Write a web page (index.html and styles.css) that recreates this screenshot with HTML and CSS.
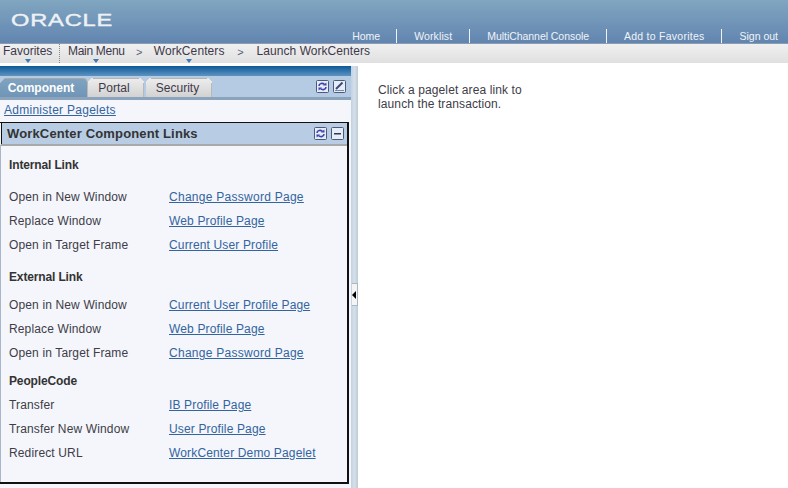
FILE: index.html
```html
<!DOCTYPE html>
<html lang="en">
<head>
<meta charset="utf-8">
<title>WorkCenter</title>
<link rel="stylesheet" href="styles.css">
</head>
<body>
<svg class="defs" width="0" height="0" aria-hidden="true">
  <symbol id="refresh" viewBox="0 0 13 13">
    <rect x="0.5" y="0.5" width="12" height="12" rx="1" fill="#e6edf6" stroke="#4a5a78"/>
    <path d="M3 6 C3 3.5 6.5 2.5 8.5 4.5" fill="none" stroke="#3c42b0" stroke-width="1.6"/>
    <path d="M7 5.6 L10.6 5.6 L10.3 2.6 Z" fill="#3c42b0"/>
    <path d="M10 7 C10 9.5 6.5 10.5 4.5 8.5" fill="none" stroke="#3c42b0" stroke-width="1.6"/>
    <path d="M6 7.4 L2.4 7.4 L2.7 10.4 Z" fill="#3c42b0"/>
  </symbol>
  <symbol id="edit" viewBox="0 0 13 13">
    <rect x="0.5" y="0.5" width="12" height="12" rx="1" fill="#e6edf6" stroke="#4a5a78"/>
    <path d="M3 9 L9.5 2.5" fill="none" stroke="#3a4a78" stroke-width="2"/>
    <path d="M2 10.5 H11" fill="none" stroke="#7a88a8"/>
  </symbol>
  <symbol id="minus" viewBox="0 0 13 13">
    <rect x="0.5" y="0.5" width="12" height="12" rx="1" fill="#e6edf6" stroke="#4a5a78"/>
    <path d="M3 6 H10 V7.5 H3 Z" fill="#2c3a60"/>
  </symbol>
</svg>

<header class="banner">
  <div class="logo"><span class="logo-text">ORACLE</span></div>
  <nav class="top-nav">
    <a class="top-link">Home</a>
    <a class="top-link top-worklist">Worklist</a>
    <a class="top-link top-multi">MultiChannel Console</a>
    <a class="top-link top-add">Add to Favorites</a>
    <a class="top-link">Sign out</a>
  </nav>
</header>

<nav class="crumbs">
  <span class="crumb crumb-fav">Favorites<i class="drop"></i></span>
  <span class="crumb crumb-main">Main Menu<i class="drop"></i></span>
  <span class="chev chev-a">&gt;</span>
  <span class="crumb crumb-wc">WorkCenters<i class="drop"></i></span>
  <span class="chev chev-b">&gt;</span>
  <span class="crumb crumb-last">Launch WorkCenters</span>
</nav>

<main class="workspace">
  <aside class="side">
    <div class="side-panel">
      <div class="top-strip"></div>
      <div class="tabbar">
        <span class="tab tab-on tab-component">Component</span>
        <span class="tab tab-portal">Portal</span>
        <span class="tab tab-security">Security</span>
        <span class="tab-icons">
          <svg class="ico"><use href="#refresh"/></svg>
          <svg class="ico"><use href="#edit"/></svg>
        </span>
      </div>
      <div class="admin"><a class="link link-admin">Administer Pagelets</a></div>
      <section class="box">
        <div class="box-head">
          <h2 class="box-title">WorkCenter Component Links</h2>
          <svg class="ico"><use href="#refresh"/></svg>
          <svg class="ico"><use href="#minus"/></svg>
        </div>
        <div class="box-body">
          <h3 class="sec sec-first">Internal Link</h3>
          <div class="row"><span>Open in New Window</span><a class="link link-wide">Change Password Page</a></div>
          <div class="row"><span>Replace Window</span><a class="link">Web Profile Page</a></div>
          <div class="row"><span>Open in Target Frame</span><a class="link">Current User Profile</a></div>
          <h3 class="sec sec-next">External Link</h3>
          <div class="row"><span>Open in New Window</span><a class="link">Current User Profile Page</a></div>
          <div class="row"><span>Replace Window</span><a class="link">Web Profile Page</a></div>
          <div class="row"><span>Open in Target Frame</span><a class="link link-wide">Change Password Page</a></div>
          <h3 class="sec sec-last">PeopleCode</h3>
          <div class="row"><span>Transfer</span><a class="link">IB Profile Page</a></div>
          <div class="row"><span>Transfer New Window</span><a class="link">User Profile Page</a></div>
          <div class="row"><span>Redirect URL</span><a class="link">WorkCenter Demo Pagelet</a></div>
        </div>
      </section>
    </div>
    <div class="splitter"><span class="handle"></span></div>
  </aside>
  <div class="content">
    <p class="hint">Click a pagelet area link to<br>launch the transaction.</p>
  </div>
</main>
</body>
</html>
```

FILE: styles.css
```css
* { box-sizing: border-box; }
html, body { margin: 0; height: 100%; overflow: hidden; }
body {
  width: 788px;
  height: 488px;
  font-family: "Liberation Sans", Arial, sans-serif;
  font-size: 12px;
  color: #403c48;
  background: #fff;
  display: flex;
  flex-direction: column;
}
.defs { display: block; height: 0; }

.banner {
  height: 44px;
  flex: none;
  display: flex;
  justify-content: space-between;
  background: linear-gradient(#80a6c0, #6285b0);
  border-bottom: 1px solid #8a9cb0;
}
.logo { padding: 11px 0 0 11px; }
.logo-text {
  display: inline-block;
  color: #eef2f5;
  font-size: 17px;
  line-height: 20px;
  letter-spacing: 0.6px;
  -webkit-text-stroke: 0.4px #eef2f5;
  transform: scaleX(1.39);
  transform-origin: left center;
}
.top-nav {
  display: flex;
  align-items: flex-end;
  padding: 0 10px 0 0;
}
.top-link {
  color: #f0f4f8;
  font-size: 10.5px;
  line-height: 14px;
  padding: 0 17px;
  border-left: 1px solid #f0f4f8;
}
.top-link:first-child { border-left: 0; padding-right: 16px; }
.top-link:last-child { padding-right: 0; }
.top-worklist { letter-spacing: 0.12px; }
.top-multi { letter-spacing: -0.05px; }
.top-add { letter-spacing: 0.25px; }

.crumbs {
  height: 19px;
  flex: none;
  display: flex;
  align-items: flex-start;
  padding-left: 3px;
  background: linear-gradient(#f0f0f0, #e0e0e0);
  line-height: 15px;
  color: #40384a;
}
.crumb { position: relative; white-space: nowrap; }
.crumb-fav {
  width: 57px;
  margin-right: 8px;
  height: 19px;
  border-right: 1px dotted #888;
}
.crumb-main { letter-spacing: -0.3px; }
.crumb-wc { letter-spacing: 0.1px; }
.crumb-last { letter-spacing: 0.05px; }
.chev { text-align: center; font-size: 11px; line-height: 16px; color: #56607a; }
.chev-a { width: 29px; }
.chev-b { width: 32px; }
.drop {
  position: absolute;
  left: 50%;
  top: 15px;
  margin-left: -3px;
  width: 0;
  height: 0;
  border: 3.5px solid transparent;
  border-top: 4px solid #3f78b5;
  border-bottom: 0;
}
.crumb-fav .drop { left: 25px; }

.workspace {
  flex: 1;
  display: flex;
  padding-top: 3px;
  min-height: 0;
}
.side { width: 358px; flex: none; display: flex; }
.side-panel {
  width: 351px;
  display: flex;
  flex-direction: column;
  background: #f4f6fb;
}
.top-strip {
  height: 10px;
  flex: none;
  background: linear-gradient(#0b5897, #5f93c0);
}
.tabbar {
  height: 24px;
  flex: none;
  display: flex;
  align-items: flex-end;
  background: #b5cbe3;
  border-bottom: 3px solid #8ba4bc;
  padding-right: 5px;
}
.tab {
  position: relative;
  height: 19px;
  line-height: 18px;
  text-align: center;
  background: linear-gradient(#ececec, #d2d2d2);
  border-top: 1px solid #b4b4b4;
  border-right: 1px solid #b8b8b8;
  color: #3f3a4a;
}
.tab::before, .tab::after {
  content: "";
  position: absolute;
  top: -1px;
  width: 5px;
  height: 5px;
}
.tab::before {
  left: 0;
  background: linear-gradient(135deg, #b5cbe3 38%, #e9e9e9 38%, #e9e9e9 62%, transparent 62%);
}
.tab::after {
  right: -1px;
  background: linear-gradient(225deg, #b5cbe3 38%, #e9e9e9 38%, #e9e9e9 62%, transparent 62%);
}
.tab-component { width: 88px; padding-right: 5px; }
.tab-portal { width: 56px; margin-right: 2px; padding-right: 3px; }
.tab-security { width: 66px; padding-right: 2px; }
.tab-on {
  background: linear-gradient(#7fa3bf, #7095b7);
  color: #fff;
  font-weight: bold;
  border-top-color: #a9a9a9;
  border-radius: 0 5px 0 0;
}
.tab-on::before { background: linear-gradient(135deg, #b5cbe3 45%, #a9b8c8 45%, #a9b8c8 60%, transparent 60%); }
.tab-on::after { display: none; }
.tab-icons {
  margin-left: auto;
  align-self: center;
  display: flex;
  gap: 4px;
}
.ico { width: 13px; height: 13px; display: block; flex: none; }
.admin { height: 22px; line-height: 20px; padding-left: 4px; flex: none; }
.link {
  color: #33649f;
  text-decoration: underline;
  white-space: nowrap;
  letter-spacing: 0.15px;
}
.link-admin, .link-wide { letter-spacing: 0.27px; }

.box {
  margin: 0 2px 0 0;
  height: 362px;
  flex: none;
  border-top: 1px solid #111;
  border-right: 2px solid #111;
  border-bottom: 2px solid #111;
  display: flex;
  flex-direction: column;
}
.box-head {
  height: 23px;
  flex: none;
  display: flex;
  align-items: center;
  gap: 4px;
  padding: 0 3px 0 6px;
  background: #b8cde4;
  border-left: 1px solid #f4f6fb;
  border-bottom: 2px solid #a9a9a9;
  box-shadow: inset 1px 0 0 #111;
}
.box-title {
  margin: 0 auto 0 0;
  font-size: 13px;
  letter-spacing: 0.15px;
  font-weight: bold;
  color: #333;
}
.box-body {
  flex: 1;
  padding: 7px 0 0 8px;
  border-left: 1px solid #a9b8c8;
}
.sec {
  margin: 0;
  font-size: 12px;
  font-weight: bold;
  line-height: 24px;
  color: #333;
  letter-spacing: -0.14px;
}
.sec-first { margin-bottom: 8px; }
.sec-next { margin-top: 8px; margin-bottom: 4px; }
.sec-last { margin-top: 4px; }
.row {
  display: grid;
  grid-template-columns: 160px 1fr;
  line-height: 24px;
  height: 24px;
  letter-spacing: 0.14px;
}

.splitter {
  width: 7px;
  position: relative;
  background: linear-gradient(90deg, #c2d2e0, #d5dfe9 50%, #bccbd9);
}
.handle {
  position: absolute;
  left: 1px;
  top: 217px;
  width: 6px;
  height: 23px;
  background: #f4f4f4;
  border: 1px solid #a9b6c4;
  border-left: 0;
}
.handle::before {
  content: "";
  position: absolute;
  left: 0;
  top: 7px;
  border: 4px solid transparent;
  border-left: 0;
  border-right: 4px solid #000;
}

.content { flex: 1; padding: 17px 0 0 20px; }
.hint { margin: 0; line-height: 14px; letter-spacing: 0.11px; }
```
